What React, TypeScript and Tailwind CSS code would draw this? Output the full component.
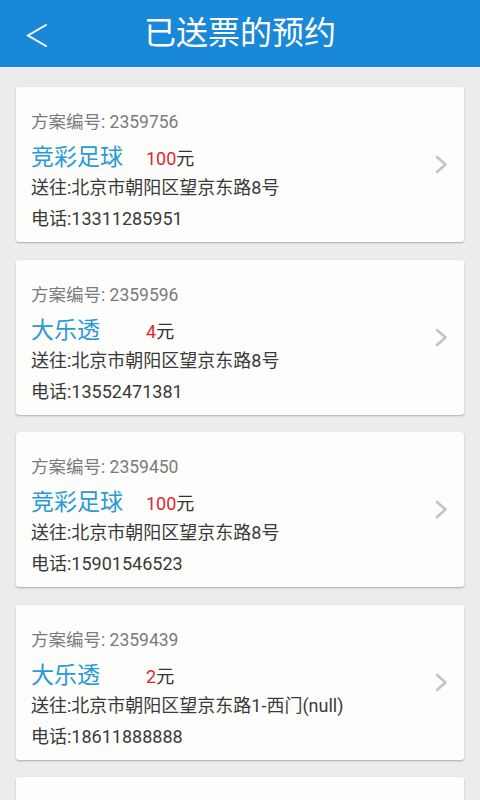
interface Order {
  id: string;
  game: string;
  amount: string;
  address: string;
  phone: string;
}

const orders: Order[] = [
  { id: "2359756", game: "竞彩足球", amount: "100", address: "北京市朝阳区望京东路8号", phone: "13311285951" },
  { id: "2359596", game: "大乐透", amount: "4", address: "北京市朝阳区望京东路8号", phone: "13552471381" },
  { id: "2359450", game: "竞彩足球", amount: "100", address: "北京市朝阳区望京东路8号", phone: "15901546523" },
  { id: "2359439", game: "大乐透", amount: "2", address: "北京市朝阳区望京东路1-西门(null)", phone: "18611888888" },
  { id: "2359421", game: "竞彩足球", amount: "100", address: "北京市朝阳区望京东路8号", phone: "13311285951" },
];

function OrderCard({ order }: { order: Order }) {
  return (
    <div className="h-[155px] shrink-0 bg-[#fdfdfb] rounded-[3px] shadow-[0_1px_2px_rgba(0,0,0,0.28)] flex items-center pl-[15px] pr-[16px]">
      <div className="flex-1 flex flex-col h-full pt-[23px]">
        <div className="text-[17.5px] leading-[24px] text-[#7b7b7b]">方案编号: {order.id}</div>
        <div className="flex items-center mt-[6px] h-[36px]">
          <span className="w-[115px] text-[23px] leading-[36px] text-[#2a99d8]">{order.game}</span>
          <span className="text-[18px] leading-[36px] text-[#333] mt-[2px]">
            <span className="text-[#e0262c]">{order.amount}</span>元
          </span>
        </div>
        <div className="text-[18px] leading-[24px] text-[#3a3a3a]">送往:{order.address}</div>
        <div className="text-[18px] leading-[24px] text-[#3a3a3a] mt-[7px]">电话:{order.phone}</div>
      </div>
      <svg width="13" height="19" viewBox="0 0 13 19" className="shrink-0">
        <polyline points="2,2 10.5,9.5 2,17" fill="none" stroke="#c3c3c3" strokeWidth="2.6" strokeLinecap="round" strokeLinejoin="round" />
      </svg>
    </div>
  );
}

export default function App() {
  return (
    <div
      className="w-[480px] h-[800px] overflow-hidden bg-[#ececec] flex flex-col"
      style={{ fontFamily: "Roboto, 'Noto Sans CJK SC', sans-serif" }}
    >
      <header className="h-[67px] shrink-0 bg-[#1a88d8] relative flex items-center justify-center">
        <svg width="24" height="26" viewBox="0 0 24 26" className="absolute left-[25px] top-[23px]">
          <polyline points="21,2 3,12.5 21,23" fill="none" stroke="#ffffff" strokeWidth="2" strokeLinecap="round" strokeLinejoin="miter" />
        </svg>
        <h1 className="text-[32px] leading-none text-white -mt-[1px]">已送票的预约</h1>
      </header>
      <div className="flex flex-col gap-[17.5px] px-[16px] pt-[20px]">
        {orders.map((o) => (
          <OrderCard key={o.id} order={o} />
        ))}
      </div>
    </div>
  );
}
